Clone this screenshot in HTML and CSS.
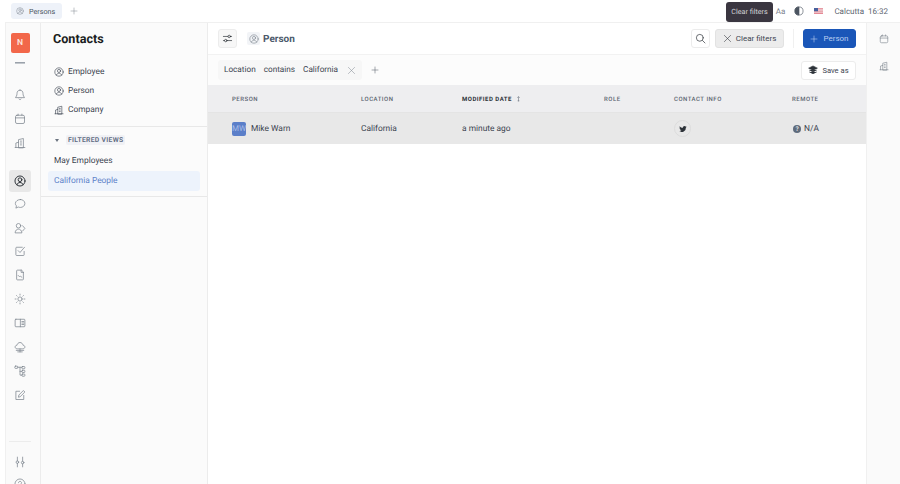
FILE: index.html
```html
<!DOCTYPE html>
<html lang="en">

<head>
    <meta charset="UTF-8">
    <title>Persons</title>
    <link rel="stylesheet" href="styles.css">
</head>

<body>
    <svg class="sprites" width="0" height="0">
        <symbol id="i-user" viewBox="0 0 16 16"><circle cx="8" cy="8" r="6.7"/><circle cx="8" cy="6.3" r="2.5"/><path d="M3.8 13c.8-2 2.3-3 4.2-3s3.400 1 4.200 3"/></symbol>
        <symbol id="i-building" viewBox="0 0 16 16"><path d="M6 14V3.500L12.500 2v12zM2.500 14V8L6 7M1.500 14h13M8.500 5.500h1.500M8.500 8h1.500M8.500 10.500h1.500"/></symbol>
        <symbol id="i-cal" viewBox="0 0 16 16"><rect x="2" y="3" width="12" height="11" rx="2"/><path d="M2 6.500h12M5.500 1.500V3M10.500 1.500V3"/></symbol>
        <symbol id="i-bell" viewBox="0 0 16 16"><path d="M8 1.500c-2.700 0-4 2-4 4.500 0 3-1.200 4-2 5.500h12c-.8-1.500-2-2.500-2-5.500 0-2.500-1.300-4.500-4-4.500zM6.500 13.500c.4.800 2.600.8 3 0"/></symbol>
        <symbol id="i-chat" viewBox="0 0 16 16"><path d="M8.500 2c3.200 0 6 2.200 6 5.300s-2.800 5.300-6 5.300c-1 0-2-.2-2.800-.6L2.500 13.500l.8-3C2.200 9.600 1.800 8.500 1.800 7.300 1.800 4.200 5.300 2 8.500 2z"/></symbol>
        <symbol id="i-users" viewBox="0 0 16 16"><circle cx="6" cy="5" r="3"/><path d="M1.500 14c.3-3 2.200-4.500 4.500-4.500S10 11 10.500 14zM11.500 5l3 3.500-3 3.500"/></symbol>
        <symbol id="i-check" viewBox="0 0 16 16"><path d="M13.500 8.500V13a1 1 0 0 1-1 1H3.500a1 1 0 0 1-1-1V4a1 1 0 0 1 1-1H11M5.500 7.500l2.500 2.500 6-7"/></symbol>
        <symbol id="i-file" viewBox="0 0 16 16"><path d="M9.500 1.500H4.500a1 1 0 0 0-1 1v11a1 1 0 0 0 1 1h7a1 1 0 0 0 1-1V4.500zM9.500 1.500v3h3M5.500 8.500l2 2 1-1 2 1.500"/></symbol>
        <symbol id="i-sun" viewBox="0 0 16 16"><circle cx="8" cy="8" r="2.800"/><path d="M8 1.500v1.200M8 13.300v1.200M1.500 8h1.200M13.300 8h1.200M3.400 3.400l.8.8M11.800 11.800l.8.8M3.400 12.600l.8-.8M11.800 4.200l.8-.8"/></symbol>
        <symbol id="i-book" viewBox="0 0 16 16"><rect x="1.500" y="3" width="13" height="10" rx="1"/><path d="M8.500 3v10M10.500 6h2.500M10.500 8h2.500M10.500 10h2.500"/></symbol>
        <symbol id="i-cloud" viewBox="0 0 16 16"><path d="M4.500 10.500c-1.800 0-3-1-3-2.500s1.200-2.300 2.500-2.300C4.300 3.500 6 2 8 2s3.700 1.500 4 3.700c1.300 0 2.500.8 2.500 2.300s-1.200 2.500-3 2.500zM3 12.500h10M5 14.500h6M8 10.500v4"/></symbol>
        <symbol id="i-tree" viewBox="0 0 16 16"><rect x="1" y="1.500" width="4" height="3" rx="1"/><rect x="10.500" y="2" width="4" height="3" rx="1"/><rect x="10.500" y="7" width="4" height="3" rx="1"/><rect x="10.500" y="12" width="4" height="3" rx="1"/><path d="M5 3h5.500M8 3v10.500h2.500M8 8.500h2.500"/></symbol>
        <symbol id="i-edit" viewBox="0 0 16 16"><path d="M7.500 3H2.500v11h10.500V8.500M6 10.500l.5-2.500 6-6 2 2-6 6z"/></symbol>
        <symbol id="i-sliders" viewBox="0 0 16 16"><path d="M4.500 1.500v5M4.500 10v4.500M11.500 1.500V7M11.500 10.500v4"/><circle cx="4.500" cy="8.200" r="1.700"/><circle cx="11.500" cy="8.800" r="1.700"/></symbol>
        <symbol id="i-help" viewBox="0 0 16 16"><circle cx="8" cy="8" r="6.700"/><path d="M6 6.300C6 5 7 4.500 8 4.500s2 .7 2 1.800c0 1.700-2 1.500-2 3.200M8 11v.8"/></symbol>
        <symbol id="i-filter" viewBox="0 0 16 16"><path d="M2 5h6.500M12.500 5H14M2 11h1.500M7.500 11H14"/><circle cx="10.500" cy="5" r="1.800"/><circle cx="5.500" cy="11" r="1.800"/></symbol>
        <symbol id="i-search" viewBox="0 0 16 16"><circle cx="7" cy="7" r="5"/><path d="M11 11l3.500 3.500"/></symbol>
        <symbol id="i-x" viewBox="0 0 16 16"><path d="M2.500 2.500l11 11M13.500 2.500l-11 11"/></symbol>
        <symbol id="i-plus" viewBox="0 0 16 16"><path d="M8 2v12M2 8h12"/></symbol>
    </svg>

    <!-- Top bar with open tabs -->
    <header class="topbar">
        <div class="tab">
            <svg class="icon tab-icon"><use href="#i-user"/></svg>
            <span>Persons</span>
        </div>
        <svg class="icon tab-add"><use href="#i-plus"/></svg>
        <div class="top-right">
            <span class="font-size">Aa</span>
            <svg class="contrast" viewBox="0 0 16 16"><circle cx="8" cy="8" r="6.500"/><path class="contrast-half" d="M8 1.500a6.500 6.500 0 0 0 0 13z"/></svg>
            <svg class="flag" viewBox="0 0 18 12">
                <rect width="18" height="12" fill="#e58a96"/>
                <path d="M0 2.500h18M0 5.500h18M0 8.500h18" stroke="#f4f4f6" stroke-width="1.300"/>
                <rect width="8" height="6.500" fill="#47609c"/>
            </svg>
            <span class="city">Calcutta</span>
            <span class="clock">16:32</span>
        </div>
        <div class="tooltip">Clear filters</div>
    </header>

    <div class="shell">
        <!-- Icon rail -->
        <nav class="rail">
            <div class="logo">N</div>
            <div class="burger"></div>
            <div class="rail-group">
                <svg class="icon"><use href="#i-bell"/></svg>
                <svg class="icon"><use href="#i-cal"/></svg>
                <svg class="icon"><use href="#i-building"/></svg>
            </div>
            <div class="rail-group rail-main">
                <div class="rail-active"><svg class="icon"><use href="#i-user"/></svg></div>
                <svg class="icon"><use href="#i-chat"/></svg>
                <svg class="icon"><use href="#i-users"/></svg>
                <svg class="icon"><use href="#i-check"/></svg>
                <svg class="icon"><use href="#i-file"/></svg>
                <svg class="icon"><use href="#i-sun"/></svg>
                <svg class="icon"><use href="#i-book"/></svg>
                <svg class="icon"><use href="#i-cloud"/></svg>
                <svg class="icon"><use href="#i-tree"/></svg>
                <svg class="icon"><use href="#i-edit"/></svg>
            </div>
            <div class="rail-bottom">
                <svg class="icon"><use href="#i-sliders"/></svg>
                <svg class="icon"><use href="#i-help"/></svg>
            </div>
        </nav>

        <!-- Contacts sidebar -->
        <aside class="sidebar">
            <h1>Contacts</h1>
            <ul class="side-list">
                <li><svg class="icon"><use href="#i-user"/></svg>Employee</li>
                <li><svg class="icon"><use href="#i-user"/></svg>Person</li>
                <li><svg class="icon"><use href="#i-building"/></svg>Company</li>
            </ul>
            <div class="views">
                <div class="views-head">
                    <span class="caret"></span>
                    <span class="views-title">FILTERED VIEWS</span>
                </div>
                <div class="view">May Employees</div>
                <div class="view current">California People</div>
            </div>
        </aside>

        <main class="content">
            <div class="page-head">
                <button class="btn btn-square"><svg class="icon"><use href="#i-filter"/></svg></button>
                <span class="doc-icon"><svg class="icon"><use href="#i-user"/></svg></span>
                <span class="doc-name">Person</span>
                <button class="btn btn-square btn-search"><svg class="icon"><use href="#i-search"/></svg></button>
                <button class="btn btn-clear"><svg class="icon"><use href="#i-x"/></svg>Clear filters</button>
                <span class="head-sep"></span>
                <button class="btn btn-primary"><svg class="icon"><use href="#i-plus"/></svg>Person</button>
            </div>

            <div class="filter-row">
                <div class="filter-chip">
                    <span>Location</span>
                    <span>contains</span>
                    <span>California</span>
                    <svg class="icon"><use href="#i-x"/></svg>
                </div>
                <svg class="icon filter-add"><use href="#i-plus"/></svg>
                <button class="btn btn-save">
                    <svg class="stack" viewBox="0 0 16 16"><path d="M8 1.500L15 5 8 8.500 1 5zM2 8l6 3 6-3M2 11l6 3 6-3"/></svg>
                    Save as
                </button>
            </div>

            <div class="grid grid-head">
                <div>PERSON</div>
                <div>LOCATION</div>
                <div class="sorted">MODIFIED DATE
                    <svg class="sort" viewBox="0 0 8 10"><path d="M4 1v8M2 3l2-2 2 2M2.500 8h3"/></svg>
                </div>
                <div>ROLE</div>
                <div>CONTACT INFO</div>
                <div>REMOTE</div>
            </div>
            <div class="grid grid-row">
                <div class="person"><span class="avatar">MW</span>Mike Warn</div>
                <div>California</div>
                <div>a minute ago</div>
                <div></div>
                <div>
                    <span class="twitter">
                        <svg viewBox="0 0 24 24"><path d="M23 5c-.8.4-1.700.6-2.600.7.900-.6 1.700-1.400 2-2.500-.9.500-1.900.9-2.900 1.100a4.600 4.600 0 0 0-7.800 4.200C7.900 8.300 4.500 6.500 2.300 3.700c-1.200 2.100-.6 4.800 1.400 6.100-.7 0-1.400-.2-2.100-.6 0 2.200 1.600 4.100 3.700 4.600-.7.200-1.400.2-2.100.1.600 1.900 2.300 3.200 4.300 3.200A9.300 9.300 0 0 1 .8 19a13 13 0 0 0 20-11.600c.9-.6 1.700-1.400 2.200-2.400z"/></svg>
                    </span>
                </div>
                <div class="remote"><span class="help-dot">?</span>N/A</div>
            </div>
        </main>

        <!-- Right rail -->
        <aside class="right-rail">
            <svg class="icon"><use href="#i-cal"/></svg>
            <svg class="icon"><use href="#i-building"/></svg>
        </aside>
    </div>
</body>

</html>
```

FILE: styles.css
```css
/* Page frame */
html,
body {
    height: 100%;
}

body {
    margin: 0;
    overflow: hidden;
    background: #fff;
    font-family: Roboto, 'Noto Sans', sans-serif;
    font-size: 8.400px;
    color: #3c4450;
    text-rendering: geometricPrecision;
}

.sprites {
    position: absolute;
}

.icon {
    width: 12px;
    height: 12px;
    flex: none;
    fill: none;
    stroke: #7d858f;
    stroke-width: 1;
    stroke-linecap: round;
    stroke-linejoin: round;
}

/* Top bar */
.topbar {
    position: relative;
    display: flex;
    align-items: center;
    height: 22px;
    padding-left: 11px;
    box-sizing: border-box;
}

.tab {
    display: flex;
    align-items: center;
    gap: 5px;
    width: 51px;
    height: 16px;
    padding-left: 5px;
    box-sizing: border-box;
    background: #eef2f9;
    border-radius: 3px;
    font-size: 7.200px;
    color: #4c5561;
}

.tab-icon {
    width: 8px;
    height: 8px;
}

.tab-add {
    width: 8px;
    height: 8px;
    margin-left: 8px;
}

.top-right {
    display: flex;
    align-items: center;
    margin-left: auto;
    padding-right: 12px;
    color: #5c6570;
    font-size: 8px;
}

.font-size {
    color: #7d858f;
}

.contrast {
    width: 10px;
    height: 10px;
    margin-left: 9px;
    fill: none;
    stroke: #4c5561;
}

.contrast-half {
    fill: #4c5561;
}

.flag {
    width: 9px;
    height: 6px;
    margin-left: 10px;
}

.city {
    margin-left: 11px;
}

.clock {
    margin-left: 4px;
}

.tooltip {
    position: absolute;
    left: 726px;
    top: 2px;
    width: 47px;
    height: 20px;
    line-height: 20px;
    text-align: center;
    background: #3a3640;
    border-radius: 3px;
    color: #d5d5d8;
    font-size: 7.200px;
}

/* App shell */
.shell {
    display: flex;
    height: 462px;
    margin-left: 5px;
    border-top: 1px solid #f0f0f0;
    box-sizing: border-box;
}

/* Icon rail */
.rail {
    display: flex;
    flex-direction: column;
    align-items: center;
    width: 36px;
    flex: none;
    box-sizing: border-box;
    padding: 10px 6px 0 0;
    background: #fafafa;
    border-left: 1px solid #f0f0f0;
    border-right: 1px solid #ececec;
}

.logo {
    width: 19px;
    height: 20px;
    line-height: 20px;
    text-align: center;
    background: #f2674a;
    border-radius: 2px;
    color: #fde5df;
    font-size: 8.500px;
    font-weight: 600;
}

.burger {
    width: 10px;
    height: 4px;
    margin-top: 9px;
    border-top: 1px solid #9aa1aa;
    border-bottom: 1px solid #c2c7cc;
}

.rail-group {
    display: flex;
    flex-direction: column;
    align-items: center;
    gap: 11.900px;
    margin-top: 25px;
}

.rail-main {
    margin-top: 21px;
}

.rail-active {
    display: flex;
    align-items: center;
    justify-content: center;
    width: 22px;
    height: 22px;
    margin-bottom: -6px;
    background: #e8e8e8;
    border-radius: 3px;
}

.rail-active .icon {
    stroke: #2c3138;
    stroke-width: 1.300;
}

.rail-bottom {
    display: flex;
    flex-direction: column;
    align-items: center;
    gap: 10px;
    width: 22px;
    margin-top: 40px;
    padding-top: 14px;
    border-top: 1px solid #ececec;
}

/* Contacts sidebar */
.sidebar {
    width: 167px;
    flex: none;
    background: #fbfbfb;
    border-right: 1px solid #ececec;
    box-sizing: border-box;
}

.sidebar h1 {
    margin: 0;
    padding: 8px 0 0 12px;
    font-size: 12.600px;
    line-height: 17px;
    font-weight: 700;
    color: #1a1d21;
}

.side-list {
    list-style: none;
    margin: 14px 0 0;
    padding: 0 0 7px 13px;
    border-bottom: 1px solid #e8e8e8;
}

.side-list li {
    display: flex;
    align-items: center;
    gap: 4px;
    height: 19px;
}

.side-list .icon {
    width: 10px;
    height: 10px;
    stroke: #3c4450;
}

.views {
    padding: 6px 7px 5px;
    border-bottom: 1px solid #e8e8e8;
}

.views-head {
    display: flex;
    align-items: center;
    gap: 7px;
    height: 14px;
    padding-left: 7px;
    margin-bottom: 5px;
}

.caret {
    width: 0;
    height: 0;
    border-left: 2.500px solid transparent;
    border-right: 2.500px solid transparent;
    border-top: 3px solid #6b7480;
}

.views-title {
    padding: 1px 2px;
    background: #f0f1f5;
    border-radius: 2px;
    font-size: 6.800px;
    font-weight: 600;
    letter-spacing: .3px;
    color: #5f6b80;
}

.view {
    height: 19px;
    line-height: 19px;
    padding-left: 6px;
    border-radius: 3px;
}

.view.current {
    height: 20px;
    line-height: 20px;
    background: #edf3fc;
    color: #5d82c9;
}

/* Main content */
.content {
    width: 658px;
    flex: none;
    background: #fff;
}

.page-head {
    display: flex;
    align-items: center;
    height: 32px;
    padding: 0 10px;
    box-sizing: border-box;
    border-bottom: 1px solid #f2f2f2;
}

.btn {
    display: flex;
    align-items: center;
    justify-content: center;
    height: 19px;
    padding: 0;
    box-sizing: border-box;
    border: 1px solid #ececec;
    border-radius: 3px;
    background: #fff;
    font-family: inherit;
    font-size: 8px;
    color: #3c4450;
}

.btn-square {
    width: 19px;
    background: #f7f7f7;
}

.btn-square .icon {
    width: 11px;
    height: 11px;
    stroke: #2c3138;
}

.doc-icon {
    display: flex;
    align-items: center;
    justify-content: center;
    width: 13px;
    height: 13px;
    margin-left: 10px;
    background: #f2f4f7;
    border-radius: 2px;
}

.doc-icon .icon {
    width: 10px;
    height: 10px;
}

.doc-name {
    margin-left: 3px;
    padding-top: 1px;
    font-size: 10px;
    font-weight: 700;
    color: #4c5a6b;
}

.btn-search {
    margin-left: auto;
    background: #fff;
}

.btn-clear {
    width: 69px;
    margin-left: 5px;
    gap: 4px;
    background: #ececec;
    border-color: #e2e2e2;
}

.btn-clear .icon {
    width: 9px;
    height: 9px;
    stroke: #2c3138;
}

.head-sep {
    width: 1px;
    height: 19px;
    margin: 0 9px;
    background: #f0f0f0;
}

.btn-primary {
    width: 53px;
    gap: 5px;
    background: #1a56b8;
    border-color: #1a56b8;
    color: #b9cdf0;
}

.btn-primary .icon {
    width: 8px;
    height: 8px;
    stroke: #dbe6f8;
}

/* Filter row */
.filter-row {
    display: flex;
    align-items: center;
    height: 30px;
    padding: 0 10px;
    box-sizing: border-box;
    background: #fcfcfc;
}

.filter-chip {
    display: flex;
    align-items: center;
    gap: 8px;
    height: 20px;
    width: 144px;
    padding-left: 6px;
    box-sizing: border-box;
    background: #f7f7f7;
    border-radius: 3px;
    font-size: 8.200px;
}

.filter-chip .icon {
    width: 9px;
    height: 9px;
    margin-left: 1px;
    stroke: #8a919a;
}

.filter-add {
    width: 8px;
    height: 8px;
    margin-left: 9px;
    stroke: #4c5561;
}

.btn-save {
    width: 55px;
    margin-left: auto;
    gap: 4px;
    font-size: 7.600px;
}

.stack {
    width: 10px;
    height: 10px;
    fill: #2c3138;
    stroke: #2c3138;
}

/* Table */
.grid {
    display: grid;
    grid-template-columns: 129px 101px 142px 70px 118px 1fr;
    align-items: center;
    padding-left: 24px;
}

.grid-head {
    height: 28px;
    padding-top: 1px;
    background: #eeeef0;
    border-bottom: 1px solid #e4e4e4;
    box-sizing: border-box;
    font-size: 6px;
    font-weight: 500;
    letter-spacing: .5px;
    color: #5c6570;
}

.sorted {
    display: flex;
    align-items: center;
    gap: 4px;
    font-weight: 700;
    color: #2c3138;
}

.sort {
    width: 5px;
    height: 6px;
    fill: none;
    stroke: #6b7480;
}

.grid-row {
    height: 31px;
    background: #e8e8e8;
    color: #3c4450;
}

.person {
    display: flex;
    align-items: center;
    gap: 5px;
}

.avatar {
    width: 14px;
    height: 14px;
    line-height: 14px;
    text-align: center;
    background: #5b7fc9;
    border-radius: 2px;
    color: #a9bde6;
    font-size: 8px;
}

.twitter {
    display: flex;
    align-items: center;
    justify-content: center;
    width: 17px;
    height: 17px;
    border: 1px solid #dcdcdc;
    border-radius: 50%;
    box-sizing: border-box;
}

.twitter svg {
    width: 8px;
    height: 8px;
    fill: #2c3138;
}

.remote {
    display: flex;
    align-items: center;
    gap: 3px;
    padding-left: 1px;
}

.help-dot {
    width: 8px;
    height: 8px;
    line-height: 8px;
    text-align: center;
    background: #5e6b7c;
    border-radius: 50%;
    color: #e8e8e8;
    font-size: 6.500px;
    font-weight: 700;
}

/* Right rail */
.right-rail {
    display: flex;
    flex-direction: column;
    align-items: center;
    gap: 17px;
    flex: 1;
    padding: 11px 0 0 0;
    background: #fafafa;
    border-left: 1px solid #f0f0f0;
}

.right-rail .icon {
    width: 10px;
    height: 10px;
}
```
